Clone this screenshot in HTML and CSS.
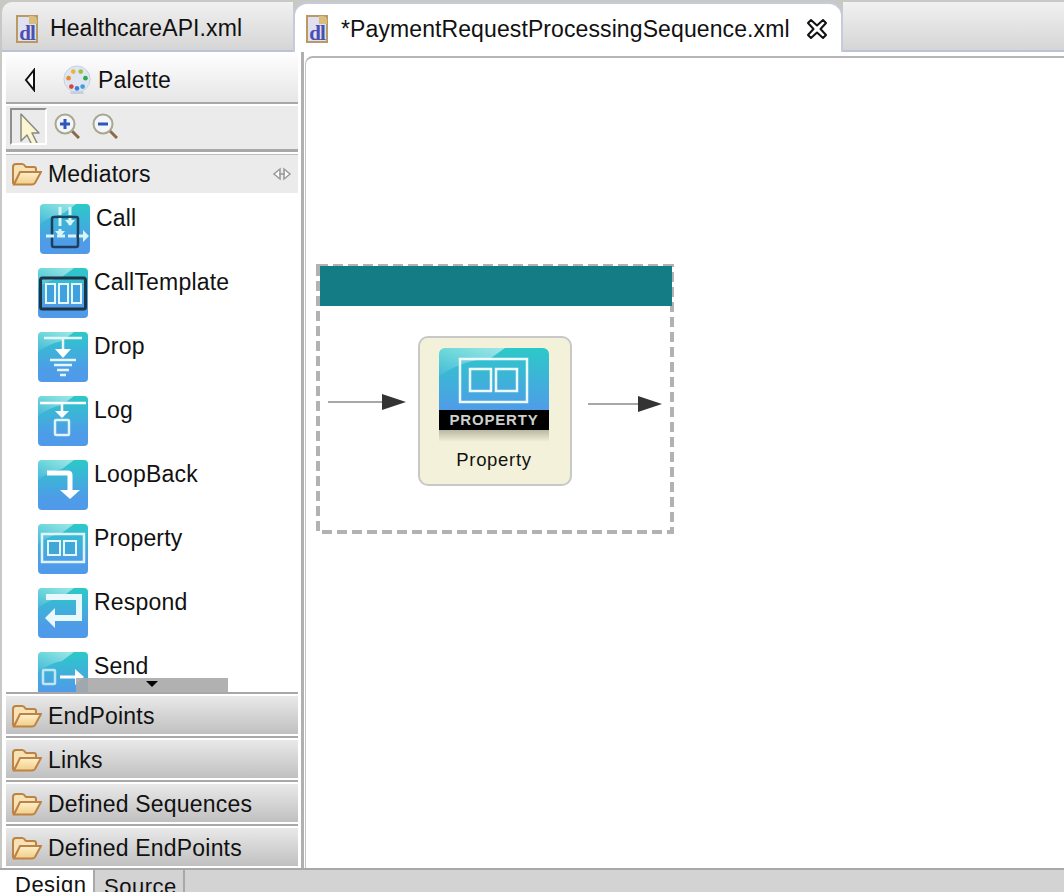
FILE: index.html
```html
<!DOCTYPE html>
<html lang="en">
<head>
    <meta charset="UTF-8">
    <title>PaymentRequestProcessingSequence.xml</title>
    <link rel="stylesheet" href="styles.css">
</head>
<body>
    <!-- shared icons -->
    <svg class="defs" width="0" height="0">
        <defs>
            <linearGradient id="tile" x1="0" y1="0" x2="0" y2="1">
                <stop offset="0" stop-color="#2cc9c9"/>
                <stop offset="0.75" stop-color="#4e9ce8"/>
                <stop offset="1" stop-color="#509ae9"/>
            </linearGradient>
            <linearGradient id="folderFill" x1="0" y1="0" x2="0" y2="1">
                <stop offset="0" stop-color="#fdf0cc"/>
                <stop offset="1" stop-color="#f3cd85"/>
            </linearGradient>
            <linearGradient id="shine" x1="0" y1="1" x2="1" y2="0">
                <stop offset="0" stop-color="#fff" stop-opacity="0.05"/>
                <stop offset="1" stop-color="#fff" stop-opacity="0.55"/>
            </linearGradient>
            <symbol id="tile-bg" viewBox="0 0 50 50">
                <rect width="50" height="50" rx="4" fill="url(#tile)"/>
                <path d="M0 20V4a4 4 0 0 1 4-4h32L24 9Q10 12 0 20z" fill="url(#shine)"/>
            </symbol>
            <symbol id="folder" viewBox="0 0 30 24">
                <path d="M1 21V5q0-3 3-3h6q2 0 3 2l1 1h8q2 0 2 2v3H9L2 22z" fill="#f6e2b4" stroke="#bd8346" stroke-width="2"/>
                <path d="M2 22.500 8 10h21l-6 11q-1 1.500-3 1.500z" fill="url(#folderFill)" stroke="#bd8346" stroke-width="2"/>
            </symbol>
            <symbol id="xmlfile" viewBox="0 0 22 28">
                <rect x="1" y="1" width="20" height="26" fill="#dfe0f0" stroke="#b89a62" stroke-width="2"/>
                <path d="M13 1h5l3 3v5h-8z" fill="#d9bd7c"/>
                <text x="11" y="25" text-anchor="middle" class="file-glyph">dl</text>
            </symbol>
        </defs>
    </svg>

    <div class="app">
        <div class="tabbar">
            <div class="tab">
                <svg class="file-icon" width="22" height="28"><use href="#xmlfile"/></svg>
                <span>HealthcareAPI.xml</span>
            </div>
            <div class="tab tab-active">
                <svg class="file-icon" width="22" height="28"><use href="#xmlfile"/></svg>
                <span class="tab-title">*PaymentRequestProcessingSequence.xml</span>
                <svg class="close-icon" width="22" height="22" viewBox="0 0 22 22">
                    <path d="M5 2 11 7.500 17 2 20 5 14.500 11 20 17 17 20 11 14.500 5 20 2 17 7.500 11 2 5z" fill="#fff" stroke="#111" stroke-width="2" stroke-linejoin="round"/>
                </svg>
            </div>
            <div class="tab-rest"></div>
        </div>

        <div class="main">
            <div class="palette">
                <div class="palette-head">
                    <svg class="collapse" width="12" height="24" viewBox="0 0 12 24">
                        <path d="M10 2 2 12l8 10z" fill="#fff" stroke="#111" stroke-width="2"/>
                    </svg>
                    <svg class="palette-icon" width="30" height="32" viewBox="0 0 32 32">
                        <circle cx="16" cy="15" r="14" fill="#dfe6f2" stroke="#c4cfe2"/>
                        <rect x="9" y="28" width="14" height="3" rx="1" fill="#c4cfe2"/>
                        <circle cx="12" cy="7" r="2.500" fill="#e9b53a"/>
                        <circle cx="20" cy="7" r="2.500" fill="#9ac13c"/>
                        <circle cx="7" cy="14" r="2.500" fill="#ee8a2c"/>
                        <circle cx="25" cy="14" r="2.500" fill="#2fa84f"/>
                        <circle cx="10" cy="23" r="2.500" fill="#e0403a"/>
                        <circle cx="16" cy="25" r="2.500" fill="#3f7fd8"/>
                        <circle cx="22" cy="23" r="2.500" fill="#3f9fd8"/>
                    </svg>
                    <span>Palette</span>
                </div>
                <div class="palette-tools">
                    <div class="tool-select">
                        <svg width="22" height="34" viewBox="0 0 22 34">
                            <path d="M3 1v27l6-6 5 10 5-2-5-10h7z" fill="#fbf6cf" stroke="#8a8a80" stroke-width="1.500" stroke-linejoin="round"/>
                        </svg>
                    </div>
                    <svg class="tool-zoom" width="26" height="26" viewBox="0 0 26 26">
                        <path d="M17 17l8 8" stroke="#8a6a48" stroke-width="3"/>
                        <circle cx="11" cy="11" r="9.500" fill="#f2f5fa" stroke="#a9a78e" stroke-width="2"/>
                        <path d="M6 11h10M11 6v10" stroke="#2f55b8" stroke-width="3"/>
                    </svg>
                    <svg class="tool-zoom tool-zoom-out" width="26" height="26" viewBox="0 0 26 26">
                        <path d="M17 17l8 8" stroke="#8a6a48" stroke-width="3"/>
                        <circle cx="11" cy="11" r="9.500" fill="#f2f5fa" stroke="#a9a78e" stroke-width="2"/>
                        <path d="M6 11h10" stroke="#2f55b8" stroke-width="3"/>
                    </svg>
                </div>

                <div class="drawer drawer-open">
                    <svg class="folder-icon" width="30" height="24"><use href="#folder"/></svg>
                    <span>Mediators</span>
                    <svg class="pin" width="20" height="14" viewBox="0 0 20 14">
                        <path d="M8 2 2 7l6 5zM12 2l6 5-6 5z" fill="#fff" stroke="#999" stroke-width="1.500"/>
                        <path d="M7 7h6" stroke="#999" stroke-width="1.500"/>
                    </svg>
                </div>

                <div class="list">
                    <div class="item item-call">
                        <svg class="tile" width="50" height="50" viewBox="0 0 50 50">
                            <use href="#tile-bg" width="50" height="50"/>
                            <rect x="12" y="13" width="26" height="30" rx="2" fill="none" stroke="#1f3f5e" stroke-width="2.500"/>
                            <path d="M20 3v25M30 3v18M6 32h38" stroke="#d8f4f6" stroke-width="3" fill="none" stroke-dasharray="8 3"/>
                            <path d="M43 26l6 6-6 6zM15 27l5 6 5-6zM25 16l5 6 5-6z" fill="#d8f4f6"/>
                        </svg>
                        <span>Call</span>
                    </div>
                    <div class="item">
                        <svg class="tile" width="50" height="50" viewBox="0 0 50 50">
                            <use href="#tile-bg" width="50" height="50"/>
                            <rect x="2.500" y="10" width="45" height="31" rx="2" fill="none" stroke="#1f3342" stroke-width="3"/>
                            <path d="M8 16h9v19H8zM21 16h9v19h-9zM34 16h9v19h-9z" fill="#3fa2de" stroke="#e6f6fb" stroke-width="2"/>
                        </svg>
                        <span>CallTemplate</span>
                    </div>
                    <div class="item">
                        <svg class="tile" width="50" height="50" viewBox="0 0 50 50">
                            <use href="#tile-bg" width="50" height="50"/>
                            <path d="M6 6h38M25 6v14M12 28h26M16 33h18M19 38h12M22 43h6" stroke="#e4f6f8" stroke-width="2.500" fill="none"/>
                            <path d="M17 17h16l-8 9z" fill="#fff"/>
                        </svg>
                        <span>Drop</span>
                    </div>
                    <div class="item">
                        <svg class="tile" width="50" height="50" viewBox="0 0 50 50">
                            <use href="#tile-bg" width="50" height="50"/>
                            <path d="M2 7h46M24 7v14" stroke="#fff" stroke-width="2.500" fill="none"/>
                            <path d="M17 15h14l-7 7z" fill="#fff"/>
                            <rect x="17" y="24" width="14" height="15" rx="1" fill="none" stroke="#dff3f8" stroke-width="2.500"/>
                        </svg>
                        <span>Log</span>
                    </div>
                    <div class="item">
                        <svg class="tile" width="50" height="50" viewBox="0 0 50 50">
                            <use href="#tile-bg" width="50" height="50"/>
                            <path d="M9 13h21q2 0 2 2v17" stroke="#fff" stroke-width="5" fill="none"/>
                            <path d="M22 30h20l-10 9z" fill="#fff"/>
                        </svg>
                        <span>LoopBack</span>
                    </div>
                    <div class="item">
                        <svg class="tile" width="50" height="50" viewBox="0 0 50 50">
                            <use href="#tile-bg" width="50" height="50"/>
                            <rect x="4" y="10" width="42" height="28" fill="none" stroke="#dff3f8" stroke-width="2.500"/>
                            <rect x="10" y="17" width="12" height="14" fill="#3fa8d8" stroke="#e6f6fb" stroke-width="2"/>
                            <rect x="26" y="17" width="12" height="14" fill="#3fa8d8" stroke="#e6f6fb" stroke-width="2"/>
                        </svg>
                        <span>Property</span>
                    </div>
                    <div class="item">
                        <svg class="tile" width="50" height="50" viewBox="0 0 50 50">
                            <use href="#tile-bg" width="50" height="50"/>
                            <path d="M8 9h33v21H15" stroke="#e9f8fa" stroke-width="6" fill="none"/>
                            <path d="M17 20v20L7 30z" fill="#e9f8fa"/>
                        </svg>
                        <span>Respond</span>
                    </div>
                    <div class="item">
                        <svg class="tile" width="50" height="50" viewBox="0 0 50 50">
                            <use href="#tile-bg" width="50" height="50"/>
                            <rect x="5" y="18" width="12" height="14" rx="1" fill="none" stroke="#bfe6f2" stroke-width="2.500"/>
                            <path d="M22 25h20" stroke="#fff" stroke-width="3"/>
                            <path d="M37 17l9 8-9 8z" fill="#fff"/>
                        </svg>
                        <span>Send</span>
                    </div>
                    <div class="scroll-down"><i class="scroll-arrow"></i></div>
                </div>

                <div class="drawer">
                    <svg class="folder-icon" width="30" height="24"><use href="#folder"/></svg>
                    <span>EndPoints</span>
                </div>
                <div class="drawer">
                    <svg class="folder-icon" width="30" height="24"><use href="#folder"/></svg>
                    <span>Links</span>
                </div>
                <div class="drawer">
                    <svg class="folder-icon" width="30" height="24"><use href="#folder"/></svg>
                    <span>Defined Sequences</span>
                </div>
                <div class="drawer">
                    <svg class="folder-icon" width="30" height="24"><use href="#folder"/></svg>
                    <span>Defined EndPoints</span>
                </div>
            </div>

            <div class="sash"></div>

            <!-- diagram: free canvas, items placed by coordinates -->
            <div class="canvas">
                <svg class="seq-frame" width="358" height="270" viewBox="0 0 358 270">
                    <rect x="2" y="2" width="354" height="266" fill="none" stroke="#b2b2b2" stroke-width="4" stroke-dasharray="10 5"/>
                </svg>
                <div class="seq-head"></div>
                <svg class="arrow arrow-in" width="80" height="18" viewBox="0 0 80 18">
                    <path d="M0 9h56" stroke="#8a8a8a" stroke-width="1.500"/>
                    <path d="M54 1l24 8-24 8z" fill="#333"/>
                </svg>
                <svg class="arrow arrow-out" width="76" height="18" viewBox="0 0 76 18">
                    <path d="M0 9h52" stroke="#8a8a8a" stroke-width="1.500"/>
                    <path d="M50 1l24 8-24 8z" fill="#333"/>
                </svg>
                <div class="node">
                    <div class="node-icon">
                        <svg class="node-art" width="110" height="62" viewBox="0 0 110 62">
                            <defs>
                                <linearGradient id="nodeTile" x1="0" y1="0" x2="0" y2="1">
                                    <stop offset="0" stop-color="#2cc9c9"/>
                                    <stop offset="1" stop-color="#4f9ce8"/>
                                </linearGradient>
                            </defs>
                            <path d="M0 62V6a6 6 0 0 1 6-6h98a6 6 0 0 1 6 6v56z" fill="url(#nodeTile)"/>
                            <path d="M0 28V6a6 6 0 0 1 6-6h60L52 10Q24 12 0 28z" fill="url(#shine)"/>
                            <rect x="21" y="11" width="67" height="43" fill="none" stroke="#eef9fc" stroke-width="2.500"/>
                            <rect x="31" y="21" width="21" height="22" fill="none" stroke="#eef9fc" stroke-width="2.500"/>
                            <rect x="57" y="21" width="21" height="22" fill="none" stroke="#eef9fc" stroke-width="2.500"/>
                        </svg>
                        <div class="node-band">PROPERTY</div>
                        <div class="node-shadow"></div>
                    </div>
                    <div class="node-label">Property</div>
                </div>
            </div>
        </div>

        <div class="pagebar">
            <div class="page page-active">Design</div>
            <div class="page">Source</div>
        </div>
    </div>
</body>
</html>
```

FILE: styles.css
```css
html, body { margin: 0; padding: 0; }
body { font-family: "Liberation Sans", Arial, sans-serif; background-color: #fff; color: #111; overflow: hidden; }
.defs { position: absolute; }
.file-glyph { font-family: "Liberation Serif", serif; font-size: 21px; font-weight: bold; fill: #4a4fb0; letter-spacing: -1px; }
.app { display: flex; flex-direction: column; width: 1064px; height: 892px; overflow: hidden; }

/* editor tabs */
.tabbar { display: flex; height: 52px; flex: none; border-top: 2px solid #c8c8c4; box-sizing: border-box; font-size: 23px; letter-spacing: 0.1px; padding-left: 2px; background-color: #c8c8c4; }
.tab { display: flex; align-items: center; gap: 12px; width: 291px; box-sizing: border-box; padding-left: 14px; padding-top: 5px; background: linear-gradient(#f1f1f1, #d5d5d5); border-bottom: 2px solid #bcc3d3; border-top-left-radius: 10px; }
.tab-active { width: 550px; padding-left: 11px; padding-top: 2px; background: #fff; border: 2px solid #c5cbd9; border-bottom: none; border-radius: 14px 14px 0 0; }
.tab-title { margin-left: 1px; margin-right: 4px; }
.file-icon { flex: none; }
.tab-rest { flex: 1; background: linear-gradient(#f1f1f1, #d5d5d5); border-bottom: 2px solid #bcc3d3; }

.main { display: flex; flex: 1; min-height: 0; box-shadow: inset 2px 0 0 #c8c8c4; }

/* palette */
.palette { width: 292px; margin-left: 6px; flex: none; display: flex; flex-direction: column; font-size: 23px; letter-spacing: 0.2px; position: relative; }
.palette-head { display: flex; align-items: center; height: 52px; flex: none; box-sizing: border-box; padding-left: 18px; padding-top: 6px; background: linear-gradient(#fff, #e6e6e6); border-bottom: 2px solid #a8a8a8; }
.collapse { margin-right: 26px; }
.palette-icon { margin-right: 6px; }
.palette-tools { display: flex; align-items: flex-start; gap: 7px; height: 46px; flex: none; box-sizing: border-box; margin-top: 2px; padding: 2px 0 0 4px; background-color: #ebebeb; border-bottom: 3px solid #a8a8a8; }
.tool-select { width: 37px; height: 37px; box-sizing: border-box; display: flex; justify-content: center; padding-top: 3px; border: 2px solid; border-color: #8f8f8f #fff #fff #8f8f8f; overflow: hidden; }
.tool-zoom { margin-top: 5px; }
.tool-zoom-out { margin-left: 5px; }

.drawer { display: flex; align-items: center; gap: 6px; height: 38px; flex: none; box-sizing: border-box; padding: 2px 0 0 6px; margin-top: 6px; background: linear-gradient(#e9e9e9, #c0c0c0); box-shadow: 0 -2px 0 #fff, 0 -4px 0 #a8a8a8; position: relative; }
.list + .drawer { margin-top: 4px; }
.drawer-open { margin-top: 3px; padding-top: 0; background: #ebebeb; box-shadow: 0 -1px 0 #bdbdbd; }
.folder-icon { flex: none; }
.pin { position: absolute; right: 6px; top: 12px; }

.list { height: 499px; flex: none; box-sizing: border-box; padding-top: 11px; overflow: hidden; position: relative; background-color: #fff; }
.item { display: flex; align-items: flex-start; gap: 6px; height: 64px; padding-left: 32px; }
.item span { margin-top: 1px; line-height: 26px; }
.item-call { padding-left: 34px; }
.tile { flex: none; display: block; filter: blur(0.4px); }
.scroll-down { position: absolute; left: 70px; bottom: 0; width: 152px; height: 14px; background-color: rgba(168, 168, 168, 0.9); }
.scroll-arrow { position: absolute; left: 70px; top: 3px; border: 6px solid transparent; border-top: 6px solid #000; border-bottom: none; }

/* sash between palette and diagram */
.sash { width: 7px; flex: none; background: linear-gradient(90deg, #fff 0, #fff 3px, #b0b0b0 3px, #b0b0b0 6px, #fff 6px); }

/* diagram */
.canvas { flex: 1; position: relative; margin-top: 4px; border-top: 2px solid #b5b5b5; border-left: 1px solid #c4c4c4; border-top-left-radius: 8px; background-color: #fff; }
.seq-frame { position: absolute; left: 10px; top: 206px; }
.seq-head { position: absolute; left: 14px; top: 208px; width: 352px; height: 40px; background-color: #137c84; }
.arrow { position: absolute; }
.arrow-in { left: 22px; top: 335px; }
.arrow-out { left: 282px; top: 337px; }
.node { position: absolute; left: 112px; top: 278px; width: 154px; height: 150px; box-sizing: border-box; padding-top: 10px; padding-right: 2px; background-color: #f4f1da; border: 2px solid #c8c8c8; border-radius: 10px; display: flex; flex-direction: column; align-items: center; }
.node-icon { width: 110px; }
.node-art { display: block; filter: blur(0.4px); }
.node-band { height: 20px; background-color: #000; color: #cfcfcf; font-size: 15px; font-weight: bold; line-height: 20px; text-align: center; letter-spacing: 0.8px; }
.node-shadow { height: 12px; background: linear-gradient(#b9b7a2, #f4f1da); }
.node-label { margin-top: 7px; font-size: 18.500px; letter-spacing: 0.7px; }

/* design / source */
.pagebar { display: flex; height: 24px; flex: none; box-sizing: border-box; background-color: #d3d3d3; border-top: 2px solid #a8a8a8; font-size: 22px; letter-spacing: 0.5px; overflow: hidden; }
.page { width: 90px; padding-left: 9px; padding-top: 4px; box-sizing: border-box; border-right: 2px solid #a8a8a8; height: 30px; line-height: 26px; }
.page-active { width: 95px; padding-left: 15px; background-color: #fff; margin-top: -2px; }
```
